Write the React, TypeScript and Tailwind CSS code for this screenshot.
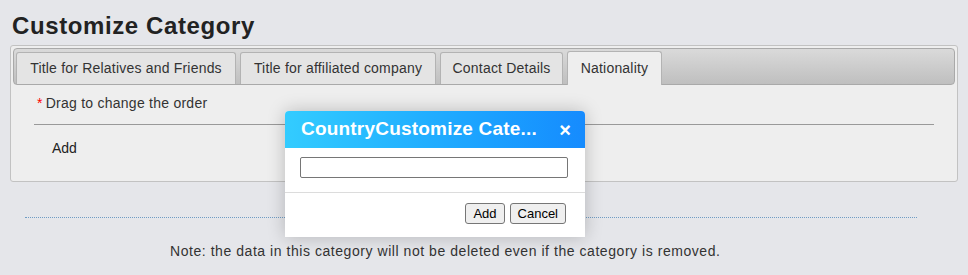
const tabs = [
  { label: "Title for Relatives and Friends", active: false, w: "w-[220px]" },
  { label: "Title for affiliated company", active: false, w: "w-[196px]" },
  { label: "Contact Details", active: false, w: "w-[123px]" },
  { label: "Nationality", active: true, w: "w-[95px]" },
];

function Dialog() {
  return (
    <div className="absolute left-[285px] top-[111px] w-[300px] bg-white rounded-t-[4px] shadow-[0_0_18px_rgba(0,0,0,0.22)]">
      <div className="h-[37px] flex items-center justify-between pl-4 pr-[14px] rounded-t-[4px] bg-gradient-to-r from-[#33ccff] to-[#168bfe]">
        <span className="text-white text-[19px] font-bold tracking-[0.2px]">CountryCustomize Cate...</span>
        <span className="text-white text-[20px] font-bold leading-none">×</span>
      </div>
      <div className="px-[15px] pt-[9px] pb-[14px] border-b border-[#dcdcdc]">
        <input className="block w-[268px] h-[21px] border border-[#767676] rounded-[2px] bg-white" />
      </div>
      <div className="flex justify-end gap-[5px] pr-[19px] pt-[10px] pb-[13px]">
        <button className="h-[21px] px-[7px] text-[13px] text-black bg-[#efefef] border border-[#767676] rounded-[3px]">Add</button>
        <button className="h-[21px] px-[7px] text-[13px] text-black bg-[#efefef] border border-[#767676] rounded-[3px]">Cancel</button>
      </div>
    </div>
  );
}

export default function App() {
  return (
    <div className="relative h-[275px] w-full bg-[#e5e6ea] font-['Liberation_Sans',Arial,sans-serif] text-[#333]">
      <h1 className="pl-[12px] pt-[11px] text-[24px] font-bold text-[#222] leading-[30px] tracking-[0.6px]">Customize Category</h1>
      <div className="mx-[10px] mt-[4px] h-[137px] border border-[#c2c2c2] rounded-[3px] bg-[#eeeeee] p-[2px]">
        <div className="h-[37px] flex items-end gap-[4px] pl-[2px] border border-[#a9a9a9] rounded-[4px] bg-gradient-to-b from-[#dadada] to-[#bfbfbf]">
          {tabs.map((t) => (
            <div
              key={t.label}
              className={`${t.w} flex items-center justify-center text-[14px] tracking-[0.2px] whitespace-nowrap rounded-t-[3px] border border-b-0 border-[#b3b3b3] ${t.active ? "bg-[#eeeeee] -mb-px h-[34px]" : "bg-[#e4e4e4] h-[32px]"}`}
            >
              {t.label}
            </div>
          ))}
        </div>
        <div className="px-[21px]">
          <div className="pl-[3px] pt-[8px] pb-[10px] text-[14px] tracking-[0.25px]">
            <span className="text-[#ff0000] mr-[3px]">*</span>Drag to change the order
          </div>
          <div className="border-t border-[#999]" />
          <div className="pl-[18px] pt-[13px] text-[14px] text-[#222]">Add</div>
        </div>
      </div>
      <div className="mx-[25px] w-[892px] mt-[35px] border-t border-dotted border-[#6f9cc4]" />
      <p className="pl-[170px] pt-[23px] text-[14px] tracking-[0.55px] text-[#333]">
        Note: the data in this category will not be deleted even if the category is removed.
      </p>
      <Dialog />
    </div>
  );
}
